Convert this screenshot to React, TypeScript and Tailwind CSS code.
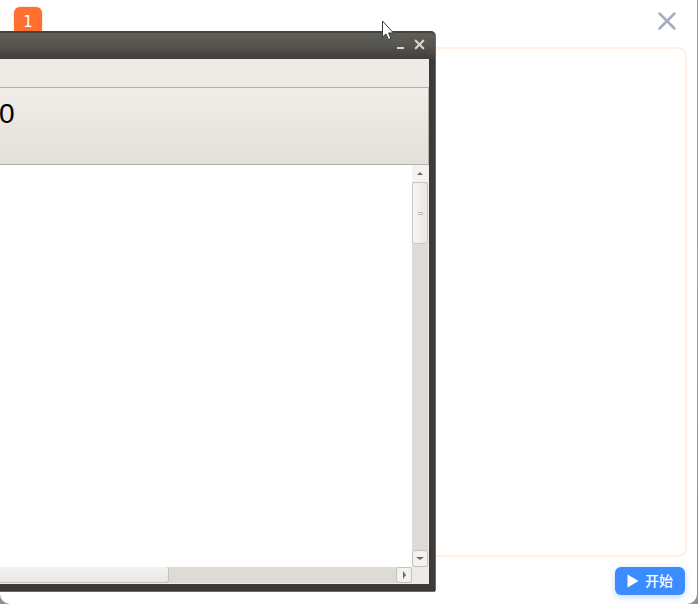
import React from 'react';
import { X } from 'lucide-react';

function WindowFrame() {
  return (
    <div className="absolute left-0 top-[31px] flex h-[560px] w-[435px] flex-col rounded-tr-[5px] bg-[#3c3b37] pb-[7px] pr-[6px] shadow-[1px_0_0_#6b6a66,0_1px_0_#6b6a66]">
      {/* Title bar */}
      <div className="mr-[-6px] flex h-[28px] shrink-0 items-start justify-end gap-[8px] rounded-tr-[5px] border-t-2 border-[#45443f] bg-gradient-to-b from-[#5f5e59] via-[#55544f] to-[#3f3e3a] pr-[8px] pt-[4px]">
        <div className="mt-[10px] h-[2px] w-[7px] bg-[#d8d6d0]" />
        <X size={15} strokeWidth={3.5} className="text-[#d8d6d0]" />
      </div>

      {/* Menu strip */}
      <div className="h-[28px] shrink-0 bg-[#eeebe6]" />

      {/* Column header */}
      <div className="flex h-[78px] shrink-0 items-start border-y border-r border-[#b5b2ab] bg-gradient-to-b from-[#f1eeea] to-[#e3dfdb] pt-[10px]">
        <span className="ml-[-1px] text-[28px] leading-[32px] text-black [font-family:'Liberation_Sans',sans-serif]">0</span>
      </div>

      {/* Content and scroll bars */}
      <div className="flex min-h-0 flex-1 flex-col bg-[#eeebe6]">
        <div className="flex min-h-0 flex-1">
          <div className="flex-1 bg-white" />
          <div className="mr-[1px] flex w-[16px] flex-col bg-[#dedbd7]">
            <div className="flex h-[17px] items-center justify-center bg-[#f3f2f0]">
              <div className="h-0 w-0 border-x-[3px] border-b-[3px] border-x-transparent border-b-[#6b6a66]" />
            </div>
            <div className="flex h-[62px] flex-col items-center justify-center gap-[1px] rounded-[3px] border border-[#c9c6c1] bg-gradient-to-r from-[#f7f6f5] to-[#e9e7e4]">
              <div className="h-px w-[5px] bg-[#bbb8b2]" />
              <div className="h-px w-[5px] bg-[#bbb8b2]" />
            </div>
            <div className="flex-1" />
            <div className="flex h-[17px] items-center justify-center rounded-[3px] border border-[#c4c1bc] bg-[#f3f2f0]">
              <div className="h-0 w-0 border-x-[4px] border-t-[3px] border-x-transparent border-t-[#6b6a66]" />
            </div>
          </div>
        </div>
        <div className="flex h-[16px] shrink-0 pr-[17px]">
          <div className="flex flex-1 bg-[#dedbd7]">
            <div className="w-[169px] rounded-r-[3px] border-r border-b border-[#c4c1bc] bg-gradient-to-b from-[#f3f2f0] to-[#e9e7e4]" />
            <div className="flex-1" />
            <div className="flex w-[16px] items-center justify-center rounded-[3px] border border-[#c4c1bc] bg-[#f3f2f0]">
              <div className="h-0 w-0 border-y-[4px] border-l-[3px] border-y-transparent border-l-[#6b6a66]" />
            </div>
          </div>
        </div>
        <div className="h-px shrink-0 bg-[#eeebe6]" />
      </div>
    </div>
  );
}

export default function App() {
  return (
    <div className="relative h-[604px] w-[698px] overflow-hidden bg-[#8f8f8f] [font-family:'Liberation_Sans','Noto_Sans_CJK_SC',sans-serif]">
      <div className="flex h-full w-[697px] flex-col rounded-b-[10px] bg-white pb-[9px] pr-[10px]">
        {/* Top row with close button */}
        <div className="flex h-[47px] shrink-0 items-start justify-end pt-[6px]">
          <X size={30} strokeWidth={2} className="mr-[5px] text-[#a0aec0]" />
        </div>

        {/* Bordered content panel */}
        <div className="h-[510px] shrink-0 rounded-[8px] border-2 border-[#ffefe4] bg-white" />

        {/* Start button */}
        <div className="flex flex-1 items-end justify-end pr-[2px]">
          <button className="flex h-[28px] w-[70px] items-center justify-center gap-[6px] rounded-[6px] bg-[#3b8cff] text-[14px] font-medium text-white shadow-[0_2px_6px_rgba(59,140,255,0.35)]">
            <svg width="12" height="14" viewBox="0 0 12 14">
              <path d="M0.5 0.5 L11.5 7 L0.5 13.5 Z" fill="white" />
            </svg>
            <span>开始</span>
          </button>
        </div>
      </div>

      {/* Right edge of the dialog */}
      <div className="absolute right-0 top-0 h-[560px] w-px bg-gradient-to-b from-[#d9894f] via-[#b39a8a] to-[#8f8f8f]" />

      {/* Step badge */}
      <div className="absolute left-[14px] top-[7px] flex h-[28px] w-[28px] justify-center rounded-[6px] bg-[#ff7030] pt-[5px] text-[15px] leading-[20px] text-white shadow-[0_0_2px_#ffb48a] [font-family:'DejaVu_Sans',sans-serif]">
        1
      </div>

      <WindowFrame />

      {/* Mouse cursor */}
      <svg className="absolute left-[381px] top-[20px]" width="14" height="21" viewBox="0 0 14 21">
        <path d="M1.5 1 L1.5 17 L5 14 L7.5 19.5 L10 18.5 L7.5 13 L12.5 13 Z" fill="white" stroke="#3a3a3a" strokeWidth="1" />
      </svg>
    </div>
  );
}
